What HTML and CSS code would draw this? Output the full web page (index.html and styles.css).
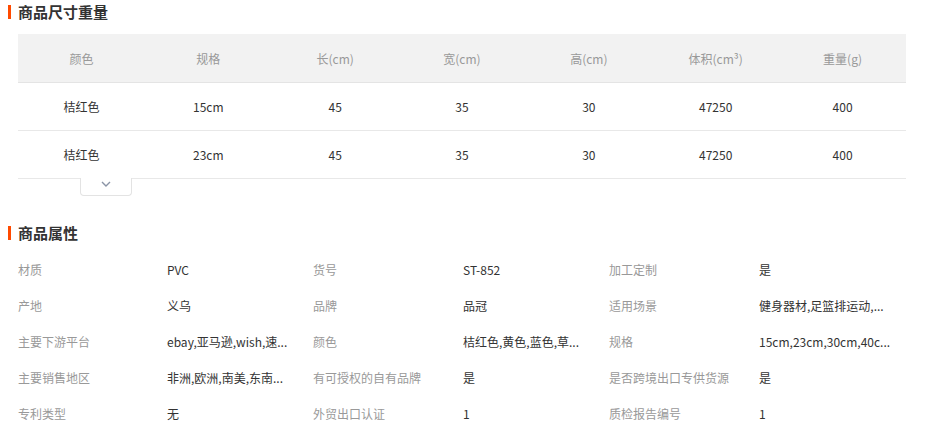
FILE: index.html
```html
<!DOCTYPE html>
<html lang="zh-CN">
<head>
<meta charset="utf-8">
<title>商品详情</title>
<link rel="stylesheet" href="styles.css">
</head>
<body>
<div class="page">
  <h2 class="title first"><span class="bar"></span>商品尺寸重量</h2>
  <div class="size-table">
    <div class="row head">
      <div class="cell">颜色</div><div class="cell">规格</div><div class="cell">长(cm)</div><div class="cell">宽(cm)</div><div class="cell">高(cm)</div><div class="cell">体积(cm³)</div><div class="cell">重量(g)</div>
    </div>
    <div class="row">
      <div class="cell">桔红色</div><div class="cell">15cm</div><div class="cell">45</div><div class="cell">35</div><div class="cell">30</div><div class="cell">47250</div><div class="cell">400</div>
    </div>
    <div class="row">
      <div class="cell">桔红色</div><div class="cell">23cm</div><div class="cell">45</div><div class="cell">35</div><div class="cell">30</div><div class="cell">47250</div><div class="cell">400</div>
    </div>
  </div>
  <div class="expand">
    <svg width="10" height="6" viewBox="0 0 10 6"><path d="M1 1 L5 5 L9 1" fill="none" stroke="#8a94a6" stroke-width="1.4"/></svg>
  </div>

  <h2 class="title second"><span class="bar"></span>商品属性</h2>
  <div class="attrs">
    <div class="k">材质</div><div class="v">PVC</div>
    <div class="k">货号</div><div class="v">ST-852</div>
    <div class="k">加工定制</div><div class="v">是</div>

    <div class="k">产地</div><div class="v">义乌</div>
    <div class="k">品牌</div><div class="v">品冠</div>
    <div class="k">适用场景</div><div class="v">健身器材,足篮排运动,...</div>

    <div class="k">主要下游平台</div><div class="v">ebay,亚马逊,wish,速...</div>
    <div class="k">颜色</div><div class="v">桔红色,黄色,蓝色,草...</div>
    <div class="k">规格</div><div class="v">15cm,23cm,30cm,40c...</div>

    <div class="k">主要销售地区</div><div class="v">非洲,欧洲,南美,东南...</div>
    <div class="k">有可授权的自有品牌</div><div class="v">是</div>
    <div class="k">是否跨境出口专供货源</div><div class="v">是</div>

    <div class="k">专利类型</div><div class="v">无</div>
    <div class="k">外贸出口认证</div><div class="v">1</div>
    <div class="k">质检报告编号</div><div class="v">1</div>
  </div>
</div>
</body>
</html>
```
FILE: styles.css
```css
* { box-sizing: border-box; }
html, body { margin: 0; padding: 0; background: #fff; }
body {
  font-family: "Noto Sans CJK SC", "Open Sans", sans-serif;
  font-size: 12px;
  color: #333;
}
.page { padding: 0 20px 0 8px; }
.title {
  display: flex;
  align-items: center;
  gap: 7px;
  height: 20px;
  line-height: 20px;
  margin: 0;
  font-size: 15px;
  font-weight: bold;
  color: #333;
}
.title.first { height: 22px; line-height: normal; }
.title.first .bar { margin-top: 1px; }
.title .bar {
  width: 3px;
  height: 14px;
  background: #ff4a00;
}
.size-table { margin: 12px 0 0 10px; }
.row {
  display: grid;
  grid-template-columns: repeat(7, 1fr);
  height: 48px;
  border-bottom: 1px solid #e8e8e8;
  align-items: center;
  text-align: center;
}
.row.head { height: 49px; background: #f2f2f2; color: #999; border-bottom-color: #e4e4e4; }
.expand {
  margin: -1px 0 0 72px;
  width: 52px;
  height: 18px;
  border: 1px solid #e3e3e3;
  border-top: none;
  border-radius: 0 0 4px 4px;
  background: #fff;
  display: flex;
  justify-content: center;
  padding-top: 3px;
}
.expand svg { display: block; }
.title.second { margin-top: 27px; }
.attrs {
  margin: 8px 0 0 10px;
  display: grid;
  grid-template-columns: 149px 146px 150px 146px 150px 1fr;
  grid-auto-rows: 36px;
  align-items: center;
}
.k { color: #999; white-space: nowrap; }
.v { color: #333; white-space: nowrap; }
```
